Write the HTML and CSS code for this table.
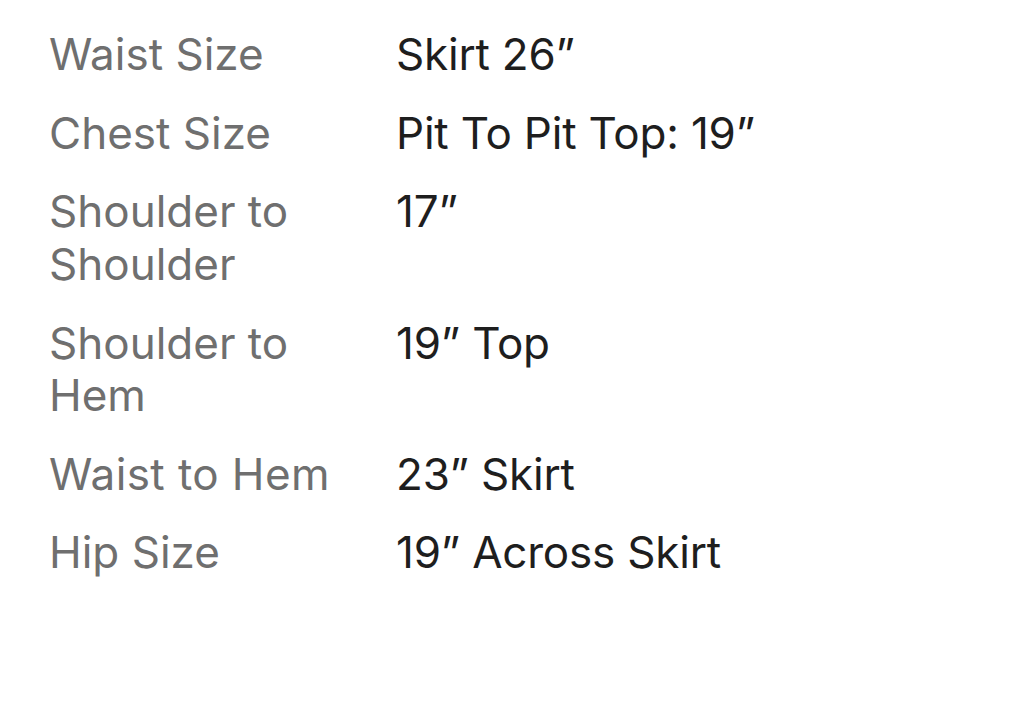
FILE: index.html
```html
<!DOCTYPE html>
<html lang="en">
<head>
<meta charset="utf-8">
<link rel="stylesheet" href="styles.css">
<title>Measurements</title>
</head>
<body>
<dl class="specs">
  <dt class="label">Waist Size</dt><dd class="value">Skirt 26”</dd>
  <dt class="label">Chest Size</dt><dd class="value">Pit To Pit Top: 19”</dd>
  <dt class="label">Shoulder to Shoulder</dt><dd class="value">17”</dd>
  <dt class="label">Shoulder to Hem</dt><dd class="value">19” Top</dd>
  <dt class="label">Waist to Hem</dt><dd class="value">23” Skirt</dd>
  <dt class="label">Hip Size</dt><dd class="value">19” Across Skirt</dd>
</dl>
</body>
</html>
```

FILE: styles.css
```css
html, body {
  margin: 0;
  padding: 0;
  background: #ffffff;
}
body {
  font-family: Inter, "Liberation Sans", sans-serif;
  font-size: 44px;
  line-height: 52.4px;
}
.specs {
  margin: 0;
  padding: 28px 0 0 49px;
  display: grid;
  grid-template-columns: 300px auto;
  column-gap: 47px;
  row-gap: 26.3px;
}
.label {
  color: #6f6f6f;
  margin: 0;
}
.label:nth-of-type(5) {
  letter-spacing: 0.4px;
}
.value {
  color: #1e1e1e;
  margin: 0;
  letter-spacing: -0.2px;
}
```
